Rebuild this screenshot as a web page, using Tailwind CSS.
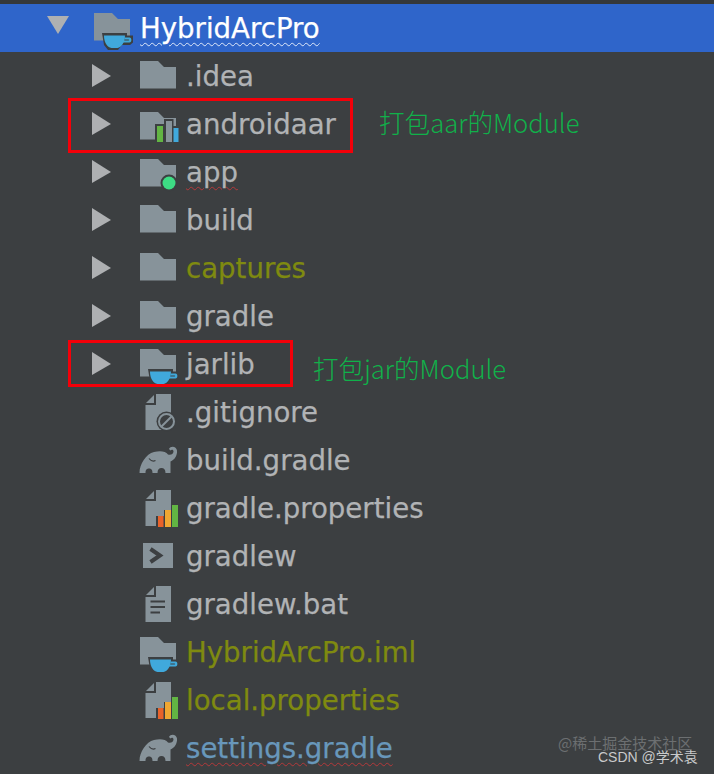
<!DOCTYPE html>
<html lang="zh">
<head>
<meta charset="utf-8">
<script src="https://cdn.jsdelivr.net/npm/@tailwindcss/browser@4"></script>
<title>HybridArcPro</title>
</head>
<body class="m-0 bg-[#3c3f41]">
<svg width="0" height="0" class="absolute">
  <defs>
    <symbol id="folder" viewBox="0 0 46 48" overflow="visible"><path d="M0 9H18L24 15H36V36.500H0Z" fill="#87939a"/></symbol>
    <symbol id="cup" viewBox="0 0 46 48" overflow="visible">
      <path d="M8 29H33V31.500H39V38.500L36 41H28L24 46H14L10 41Z" fill="#3c3f41"/>
      <path d="M10 31.500H31C31 38 27.500 43.500 23.500 44H17.500C13 43.500 10 38 10 31.500Z" fill="#40a9dc"/>
      <path d="M30.500 33.500H35.500C38 33.500 38 38.500 35.500 38.500H28L29.500 36.500H34.500C35.500 36.500 35.500 35.500 34.500 35.500H30.500Z" fill="#40a9dc"/>
    </symbol>
    <symbol id="file" viewBox="0 0 46 48" overflow="visible">
      <path d="M16 6H31V42H5.500V17H16Z" fill="#87939a"/><path d="M14 7V15H6Z" fill="#87939a"/>
    </symbol>
    <symbol id="bars" viewBox="0 0 46 48" overflow="visible">
      <path d="M16 32H24V26H31V21H40V45H16Z" fill="#3c3f41"/>
      <rect x="18" y="32" width="5.500" height="11" fill="#e8622a"/>
      <rect x="25" y="26" width="6" height="17" fill="#f0a732"/>
      <rect x="32" y="21" width="6" height="22" fill="#62b543"/>
    </symbol>
    <symbol id="elephant" viewBox="0 0 46 48" overflow="visible">
      <path d="M-0.500 37C-0.500 28 6 18 14 16C20 14.500 25.500 15 28 18.500C30.500 19.500 33.500 18 33.500 15.500C33.500 13.500 31.500 13 30.500 14.500L29 13C30.500 9.500 36.500 10 37 14.500C37.500 19.500 34.500 24 30.500 25.500V37H25.500C25.500 33.500 24 32 21.500 32C19 32 17.500 33.500 17.500 37H12.500C12.500 33.500 11 32.500 9 32.500C7 32.500 5.500 33.500 5.500 37Z" fill="#87939a"/>
      <path d="M9 22.500C11 25 13.500 25.500 15.500 24.500" fill="none" stroke="#3c3f41" stroke-width="1.200"/>
    </symbol>
  </defs>
</svg>

<main class="relative h-[774px] w-[714px] overflow-hidden bg-[#3c3f41] pt-1 font-['DejaVu_Sans',sans-serif] text-[27.600px] text-[#b1b3b5] [-webkit-text-stroke:0.25px_currentColor]">
  <div class="absolute inset-x-0 top-0 h-1 bg-[#35383a]"></div>

  <!-- root row -->
  <div class="flex h-12 items-center bg-[#2f65ca] pl-[47px] text-white">
    <svg class="w-[47px] shrink-0" width="22" height="48" viewBox="0 0 47 48"><path d="M0 12H22L11 30Z" fill="#aeb0b2"/></svg>
    <svg class="shrink-0 overflow-visible" width="46" height="48"><use href="#folder"/><use href="#cup"/></svg>
    <span class="pt-[2px] underline decoration-[#dfe8f8] decoration-wavy decoration-1 underline-offset-[4px]">HybridArcPro</span>
  </div>

  <!-- .idea -->
  <div class="flex h-12 items-center">
    <div class="w-[92px] shrink-0"></div>
    <svg class="shrink-0" width="48" height="48" viewBox="0 0 48 48"><path d="M0 12L19 24L0 35Z" fill="#aeb0b2"/></svg>
    <svg class="shrink-0 overflow-visible" width="46" height="48"><use href="#folder"/></svg>
    <span class="pt-[2px]">.idea</span>
  </div>

  <!-- androidaar -->
  <div class="relative flex h-12 items-center">
    <div class="w-[92px] shrink-0"></div>
    <svg class="shrink-0" width="48" height="48" viewBox="0 0 48 48"><path d="M0 12L19 24L0 35Z" fill="#aeb0b2"/></svg>
    <svg class="shrink-0 overflow-visible" width="46" height="48">
      <g transform="translate(0 3)"><use href="#folder"/></g>
      <path d="M15 24H24V19H33.500V26H40V44H15Z" fill="#3c3f41"/>
      <rect x="17" y="26" width="6" height="16" fill="#62b543"/>
      <path d="M26 42V21H32V42" fill="#87939a"/>
      <rect x="33.500" y="28" width="5" height="14" fill="#40a9dc"/>
    </svg>
    <span class="pt-[2px]">androidaar</span>
    <div class="absolute left-[68px] top-[-2px] h-[55px] w-[285px] border-[3.500px] border-[#f40009]"></div>
    <span class="absolute left-[379px] top-[4px] font-['Noto_Sans_CJK_SC',sans-serif] text-[25.600px] font-light leading-9 text-[#10b14a] [-webkit-text-stroke:0px]">打包aar的Module</span>
  </div>

  <!-- app -->
  <div class="flex h-12 items-center">
    <div class="w-[92px] shrink-0"></div>
    <svg class="shrink-0" width="48" height="48" viewBox="0 0 48 48"><path d="M0 12L19 24L0 35Z" fill="#aeb0b2"/></svg>
    <svg class="shrink-0 overflow-visible" width="46" height="48">
      <g transform="translate(0 2)"><use href="#folder"/></g>
      <circle cx="29" cy="35" r="8.500" fill="#3c3f41"/><circle cx="29" cy="35" r="6.500" fill="#3ddc84"/>
    </svg>
    <span class="pt-[2px] underline decoration-[#b5383a] decoration-wavy decoration-1 underline-offset-[4px]">app</span>
  </div>

  <!-- build -->
  <div class="flex h-12 items-center">
    <div class="w-[92px] shrink-0"></div>
    <svg class="shrink-0" width="48" height="48" viewBox="0 0 48 48"><path d="M0 12L19 24L0 35Z" fill="#aeb0b2"/></svg>
    <svg class="shrink-0 overflow-visible" width="46" height="48"><use href="#folder"/></svg>
    <span class="pt-[2px]">build</span>
  </div>

  <!-- captures -->
  <div class="flex h-12 items-center">
    <div class="w-[92px] shrink-0"></div>
    <svg class="shrink-0" width="48" height="48" viewBox="0 0 48 48"><path d="M0 12L19 24L0 35Z" fill="#aeb0b2"/></svg>
    <svg class="shrink-0 overflow-visible" width="46" height="48"><use href="#folder"/></svg>
    <span class="pt-[2px] text-[#7f8a10]">captures</span>
  </div>

  <!-- gradle -->
  <div class="flex h-12 items-center">
    <div class="w-[92px] shrink-0"></div>
    <svg class="shrink-0" width="48" height="48" viewBox="0 0 48 48"><path d="M0 12L19 24L0 35Z" fill="#aeb0b2"/></svg>
    <svg class="shrink-0 overflow-visible" width="46" height="48"><use href="#folder"/></svg>
    <span class="pt-[2px]">gradle</span>
  </div>

  <!-- jarlib -->
  <div class="relative flex h-12 items-center">
    <div class="w-[92px] shrink-0"></div>
    <svg class="shrink-0" width="48" height="48" viewBox="0 0 48 48"><path d="M0 12L19 24L0 35Z" fill="#aeb0b2"/></svg>
    <svg class="shrink-0 overflow-visible" width="46" height="48"><use href="#folder"/><use href="#cup"/></svg>
    <span class="pt-[2px]">jarlib</span>
    <div class="absolute left-[68px] top-0 h-[47px] w-[225px] border-[3.500px] border-[#f40009]"></div>
    <span class="absolute left-[313px] top-[10px] font-['Noto_Sans_CJK_SC',sans-serif] text-[25.600px] font-light leading-9 text-[#10b14a] [-webkit-text-stroke:0px]">打包jar的Module</span>
  </div>

  <!-- .gitignore -->
  <div class="flex h-12 items-center pl-[140px]">
    <svg class="shrink-0 overflow-visible" width="46" height="48">
      <use href="#file"/>
      <circle cx="26.500" cy="33.500" r="10" fill="#3c3f41"/>
      <circle cx="26.500" cy="33.500" r="7.500" fill="none" stroke="#87939a" stroke-width="2"/>
      <path d="M21.500 38.500L31.500 28.500" stroke="#87939a" stroke-width="2"/>
    </svg>
    <span class="pt-[2px]">.gitignore</span>
  </div>

  <!-- build.gradle -->
  <div class="flex h-12 items-center pl-[140px]">
    <svg class="shrink-0 overflow-visible" width="46" height="48"><use href="#elephant"/></svg>
    <span class="pt-[2px]">build.gradle</span>
  </div>

  <!-- gradle.properties -->
  <div class="flex h-12 items-center pl-[140px]">
    <svg class="shrink-0 overflow-visible" width="46" height="48"><use href="#file"/><use href="#bars"/></svg>
    <span class="pt-[2px]">gradle.properties</span>
  </div>

  <!-- gradlew -->
  <div class="flex h-12 items-center pl-[140px]">
    <svg class="shrink-0 overflow-visible" width="46" height="48">
      <rect x="3" y="11" width="30" height="25" fill="#87939a"/>
      <path d="M10.500 17L20 23.500L10.500 30" fill="none" stroke="#3c3f41" stroke-width="4"/>
    </svg>
    <span class="pt-[2px]">gradlew</span>
  </div>

  <!-- gradlew.bat -->
  <div class="flex h-12 items-center pl-[140px]">
    <svg class="shrink-0 overflow-visible" width="46" height="48">
      <use href="#file"/>
      <path d="M10.500 21.500H25M10.500 27H25M10.500 32.500H20" stroke="#3c3f41" stroke-width="2"/>
    </svg>
    <span class="pt-[2px]">gradlew.bat</span>
  </div>

  <!-- HybridArcPro.iml -->
  <div class="flex h-12 items-center pl-[140px]">
    <svg class="shrink-0 overflow-visible" width="46" height="48"><use href="#folder"/><use href="#cup"/></svg>
    <span class="pt-[2px] text-[#7f8a10]">HybridArcPro.iml</span>
  </div>

  <!-- local.properties -->
  <div class="flex h-12 items-center pl-[140px]">
    <svg class="shrink-0 overflow-visible" width="46" height="48"><use href="#file"/><use href="#bars"/></svg>
    <span class="pt-[2px] text-[#7f8a10]">local.properties</span>
  </div>

  <!-- settings.gradle -->
  <div class="flex h-12 items-center pl-[140px]">
    <svg class="shrink-0 overflow-visible" width="46" height="48"><use href="#elephant"/></svg>
    <span class="pt-[2px] text-[#6897bb] underline decoration-[#b5383a] decoration-wavy decoration-1 underline-offset-[4px]">settings.gradle</span>
  </div>

  <!-- watermarks -->
  <span class="absolute left-[558px] top-[733px] font-['Noto_Sans_CJK_SC',sans-serif] text-[15px] leading-5 text-[#6c6f71] [-webkit-text-stroke:0px]">@稀土掘金技术社区</span>
  <span class="absolute left-[598px] top-[747px] font-['Liberation_Sans','Noto_Sans_CJK_SC',sans-serif] text-[14px] leading-5 text-[#c9cacb] [-webkit-text-stroke:0px]">CSDN @学术袁</span>
</main>
</body>
</html>
